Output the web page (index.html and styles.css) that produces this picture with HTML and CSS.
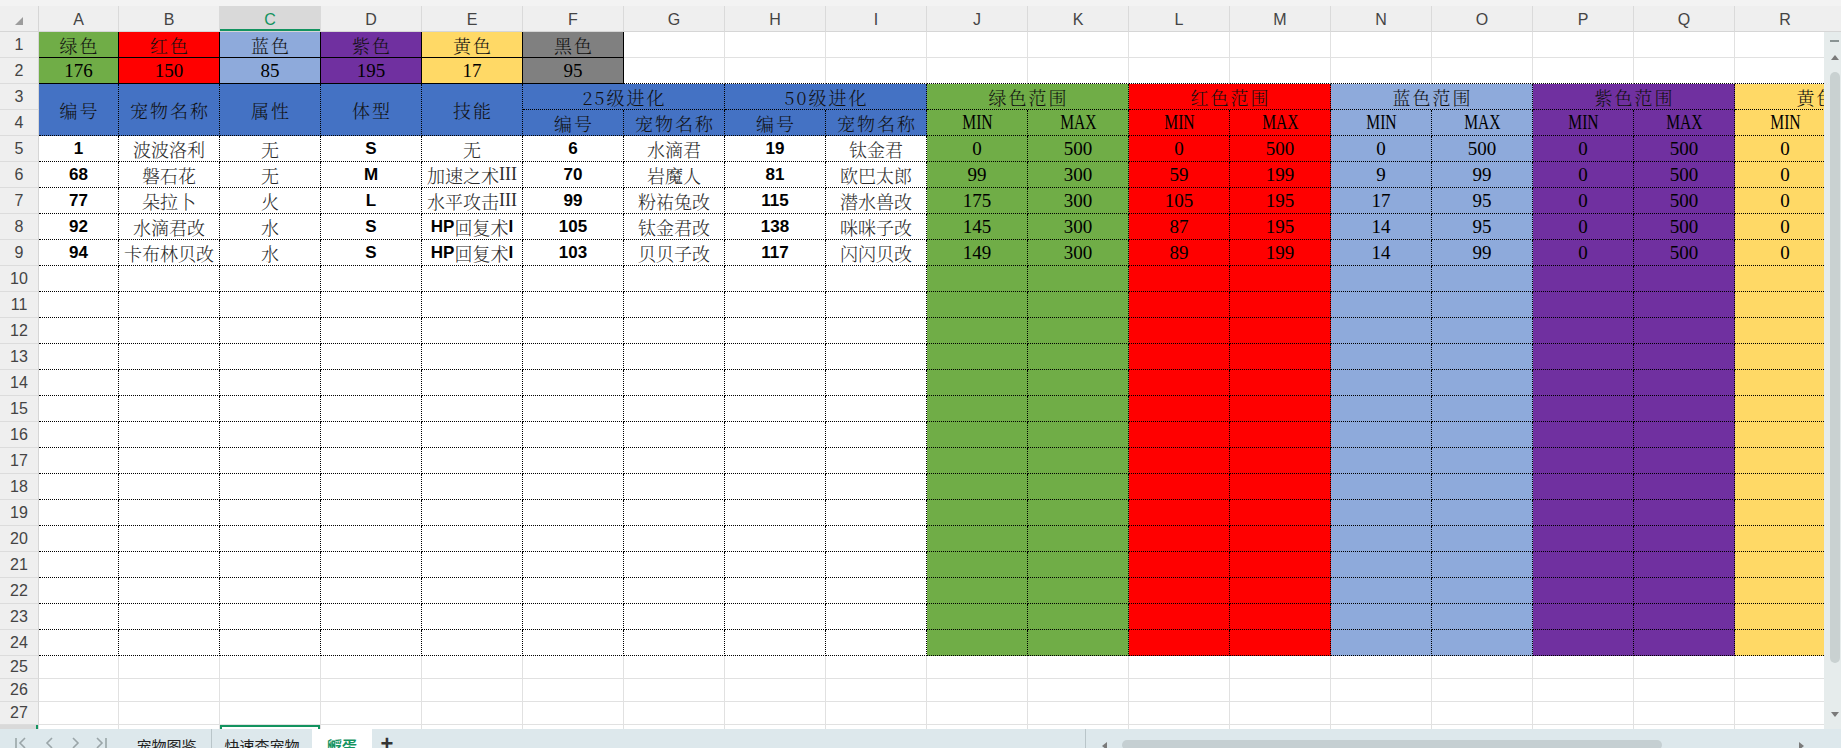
FILE: index.html
```html
<!DOCTYPE html>
<html lang="zh-CN">
  <head>
    <meta charset="UTF-8" />
    <title>孵蛋</title>
    <link rel="stylesheet" href="styles.css">
  </head>
  <body>
    <div id="app">
      <div class="strip"></div>
      <div id="main">
        <div id="sheet">
          <div id="grid">
            <div class="row">
              <div class="corner">
                <svg width="8" height="8" viewBox="0 0 8 8"><polygon points="8,0 8,8 0,8" fill="#9c9c9c"/></svg>
              </div>
              <div class="ch">A</div>
              <div class="ch">B</div>
              <div class="ch active">C</div>
              <div class="ch">D</div>
              <div class="ch">E</div>
              <div class="ch">F</div>
              <div class="ch">G</div>
              <div class="ch">H</div>
              <div class="ch">I</div>
              <div class="ch">J</div>
              <div class="ch">K</div>
              <div class="ch">L</div>
              <div class="ch">M</div>
              <div class="ch">N</div>
              <div class="ch">O</div>
              <div class="ch">P</div>
              <div class="ch">Q</div>
              <div class="ch">R</div>
              <div class="ch"></div>
            </div>

            <div class="row">
              <div class="rh">1</div>
              <div class="cell box gr cn sp">绿色</div>
              <div class="cell box rd cn sp">红色</div>
              <div class="cell box bl cn sp">蓝色</div>
              <div class="cell box pu cn sp">紫色</div>
              <div class="cell box ye cn sp">黄色</div>
              <div class="cell box gy cn sp">黑色</div>
              <div class="cell"></div><div class="cell"></div><div class="cell"></div>
              <div class="cell"></div><div class="cell"></div><div class="cell"></div>
              <div class="cell"></div><div class="cell"></div><div class="cell"></div>
              <div class="cell"></div><div class="cell"></div><div class="cell"></div>
              <div class="cell"></div>
            </div>

            <div class="row">
              <div class="rh">2</div>
              <div class="cell box gr ser">176</div>
              <div class="cell box rd ser">150</div>
              <div class="cell box bl ser">85</div>
              <div class="cell box pu ser">195</div>
              <div class="cell box ye ser">17</div>
              <div class="cell box gy ser">95</div>
              <div class="cell edge"></div><div class="cell edge"></div><div class="cell edge"></div>
              <div class="cell edge"></div><div class="cell edge"></div><div class="cell edge"></div>
              <div class="cell edge"></div><div class="cell edge"></div><div class="cell edge"></div>
              <div class="cell edge"></div><div class="cell edge"></div><div class="cell edge"></div>
              <div class="cell edge"></div>
            </div>

            <div class="row">
              <div class="rh">3</div>
              <div class="cell dot hd cn sp tall">编号</div>
              <div class="cell dot hd cn sp tall">宠物名称</div>
              <div class="cell dot hd cn sp tall">属性</div>
              <div class="cell dot hd cn sp tall">体型</div>
              <div class="cell dot hd cn sp tall">技能</div>
              <div class="cell dot hd cn sp wide">25级进化</div>
              <div class="cell dot hd cn sp wide">50级进化</div>
              <div class="cell dot gr cn sp wide">绿色范围</div>
              <div class="cell dot rd cn sp wide">红色范围</div>
              <div class="cell dot bl cn sp wide">蓝色范围</div>
              <div class="cell dot pu cn sp wide">紫色范围</div>
              <div class="cell dot ye cn sp wide">黄色范围</div>
            </div>

            <div class="row">
              <div class="rh">4</div>
              <div class="cell dot hd cn sp">编号</div>
              <div class="cell dot hd cn sp">宠物名称</div>
              <div class="cell dot hd cn sp">编号</div>
              <div class="cell dot hd cn sp">宠物名称</div>
              <div class="cell dot gr"><span class="mm">MIN</span></div>
              <div class="cell dot gr"><span class="mm">MAX</span></div>
              <div class="cell dot rd"><span class="mm">MIN</span></div>
              <div class="cell dot rd"><span class="mm">MAX</span></div>
              <div class="cell dot bl"><span class="mm">MIN</span></div>
              <div class="cell dot bl"><span class="mm">MAX</span></div>
              <div class="cell dot pu"><span class="mm">MIN</span></div>
              <div class="cell dot pu"><span class="mm">MAX</span></div>
              <div class="cell dot ye"><span class="mm">MIN</span></div>
              <div class="cell dot ye"></div>
            </div>

            <div class="row">
              <div class="rh">5</div>
              <div class="cell dot num">1</div>
              <div class="cell dot cn">波波洛利</div>
              <div class="cell dot cn">无</div>
              <div class="cell dot num">S</div>
              <div class="cell dot cn">无</div>
              <div class="cell dot num">6</div>
              <div class="cell dot cn">水滴君</div>
              <div class="cell dot num">19</div>
              <div class="cell dot cn">钛金君</div>
              <div class="cell dot gr ser">0</div>
              <div class="cell dot gr ser">500</div>
              <div class="cell dot rd ser">0</div>
              <div class="cell dot rd ser">500</div>
              <div class="cell dot bl ser">0</div>
              <div class="cell dot bl ser">500</div>
              <div class="cell dot pu ser">0</div>
              <div class="cell dot pu ser">500</div>
              <div class="cell dot ye ser">0</div>
              <div class="cell dot ye"></div>
            </div>

            <div class="row">
              <div class="rh">6</div>
              <div class="cell dot num">68</div>
              <div class="cell dot cn">磐石花</div>
              <div class="cell dot cn">无</div>
              <div class="cell dot num">M</div>
              <div class="cell dot cn">加速之术<span class="lat">III</span></div>
              <div class="cell dot num">70</div>
              <div class="cell dot cn">岩魔人</div>
              <div class="cell dot num">81</div>
              <div class="cell dot cn">欧巴太郎</div>
              <div class="cell dot gr ser">99</div>
              <div class="cell dot gr ser">300</div>
              <div class="cell dot rd ser">59</div>
              <div class="cell dot rd ser">199</div>
              <div class="cell dot bl ser">9</div>
              <div class="cell dot bl ser">99</div>
              <div class="cell dot pu ser">0</div>
              <div class="cell dot pu ser">500</div>
              <div class="cell dot ye ser">0</div>
              <div class="cell dot ye"></div>
            </div>

            <div class="row">
              <div class="rh">7</div>
              <div class="cell dot num">77</div>
              <div class="cell dot cn">朵拉卜</div>
              <div class="cell dot cn">火</div>
              <div class="cell dot num">L</div>
              <div class="cell dot cn">水平攻击<span class="lat">III</span></div>
              <div class="cell dot num">99</div>
              <div class="cell dot cn">粉祐兔改</div>
              <div class="cell dot num">115</div>
              <div class="cell dot cn">潜水兽改</div>
              <div class="cell dot gr ser">175</div>
              <div class="cell dot gr ser">300</div>
              <div class="cell dot rd ser">105</div>
              <div class="cell dot rd ser">195</div>
              <div class="cell dot bl ser">17</div>
              <div class="cell dot bl ser">95</div>
              <div class="cell dot pu ser">0</div>
              <div class="cell dot pu ser">500</div>
              <div class="cell dot ye ser">0</div>
              <div class="cell dot ye"></div>
            </div>

            <div class="row">
              <div class="rh">8</div>
              <div class="cell dot num">92</div>
              <div class="cell dot cn">水滴君改</div>
              <div class="cell dot cn">水</div>
              <div class="cell dot num">S</div>
              <div class="cell dot cn"><span class="num">HP</span>回复术<span class="num">I</span></div>
              <div class="cell dot num">105</div>
              <div class="cell dot cn">钛金君改</div>
              <div class="cell dot num">138</div>
              <div class="cell dot cn">咪咪子改</div>
              <div class="cell dot gr ser">145</div>
              <div class="cell dot gr ser">300</div>
              <div class="cell dot rd ser">87</div>
              <div class="cell dot rd ser">195</div>
              <div class="cell dot bl ser">14</div>
              <div class="cell dot bl ser">95</div>
              <div class="cell dot pu ser">0</div>
              <div class="cell dot pu ser">500</div>
              <div class="cell dot ye ser">0</div>
              <div class="cell dot ye"></div>
            </div>

            <div class="row">
              <div class="rh">9</div>
              <div class="cell dot num">94</div>
              <div class="cell dot cn">卡布林贝改</div>
              <div class="cell dot cn">水</div>
              <div class="cell dot num">S</div>
              <div class="cell dot cn"><span class="num">HP</span>回复术<span class="num">I</span></div>
              <div class="cell dot num">103</div>
              <div class="cell dot cn">贝贝子改</div>
              <div class="cell dot num">117</div>
              <div class="cell dot cn">闪闪贝改</div>
              <div class="cell dot gr ser">149</div>
              <div class="cell dot gr ser">300</div>
              <div class="cell dot rd ser">89</div>
              <div class="cell dot rd ser">199</div>
              <div class="cell dot bl ser">14</div>
              <div class="cell dot bl ser">99</div>
              <div class="cell dot pu ser">0</div>
              <div class="cell dot pu ser">500</div>
              <div class="cell dot ye ser">0</div>
              <div class="cell dot ye"></div>
            </div>
            <!-- rows 10-28 are built by the script below -->
          </div>
        </div>

        <div id="vscroll">
          <div class="vs-head"></div>
          <div class="vs-track">
            <span class="vs-dash"></span>
            <span class="vs-up"></span>
            <span class="vs-thumb"></span>
            <span class="vs-down"></span>
          </div>
        </div>
      </div>

      <div id="tabs">
        <div class="nav">
          <svg width="122" height="19" viewBox="0 0 122 19">
            <g fill="none" stroke="#9aa5a8" stroke-width="1.6">
              <line x1="16" y1="9" x2="16" y2="19"/>
              <polyline points="25,9 20,14 25,19"/>
              <polyline points="52,9 47,14 52,19"/>
              <polyline points="73,9 78,14 73,19"/>
              <polyline points="97,9 102,14 97,19"/>
              <line x1="106" y1="9" x2="106" y2="19"/>
            </g>
          </svg>
        </div>
        <div class="tab t1">宠物图鉴</div>
        <div class="tab t2">快速查宠物</div>
        <div class="tab current">孵蛋</div>
        <div class="tab add">+</div>
        <div class="hscroll">
          <span class="hs-left"></span>
          <span class="hs-thumb"></span>
          <span class="hs-right"></span>
        </div>
      </div>
    </div>

    <script>
      const grid = document.getElementById("grid");
      const bands = ["gr", "gr", "rd", "rd", "bl", "bl", "pu", "pu", "ye", "ye"];

      for (let r = 10; r <= 28; r++) {
        const row = document.createElement("div");
        row.className = "row";
        let html = '<div class="rh' + (r === 28 ? " cur" : "") + '">' + r + "</div>";
        for (let c = 0; c < 19; c++) {
          if (r <= 24) {
            const band = c >= 9 ? " " + bands[c - 9] : "";
            html += '<div class="cell dot' + band + '"></div>';
          } else {
            // C28 is the selected cell, only its top edge shows
            html += '<div class="cell' + (r === 28 && c === 2 ? " sel" : "") + '"></div>';
          }
        }
        row.innerHTML = html;
        grid.appendChild(row);
      }
    </script>
  </body>
</html>
```

FILE: styles.css
```css
* {
  box-sizing: border-box;
}
body {
  margin: 0;
  width: 1841px;
  height: 748px;
  overflow: hidden;
  background-color: #fff;
  font-family: "Liberation Sans", Arial, sans-serif;
}
#app {
  display: flex;
  flex-direction: column;
  height: 748px;
}
.strip {
  flex: none;
  height: 6px;
  background-color: #f3f3f3;
}
#main {
  flex: none;
  display: flex;
  height: 723px;
}
#sheet {
  width: 1824px;
  overflow: hidden;
}
#grid {
  display: grid;
  grid-template-columns: 39px 80px repeat(18, 101px);
  grid-template-rows: 26px repeat(24, 26px) repeat(3, 23px) 26px;
  width: 1937px;
}
.row {
  display: contents;
}

/* headers */
.corner {
  display: flex;
  align-items: flex-start;
  padding: 11px 0 0 15px;
  background-color: #efefef;
  border-right: 1px solid #d6d6d6;
  border-bottom: 1px solid #d6d6d6;
}
.ch {
  display: flex;
  align-items: center;
  justify-content: center;
  padding-top: 2px;
  background-color: #efefef;
  border-right: 1px solid #dadada;
  border-bottom: 1px solid #d6d6d6;
  color: #444;
  font-size: 16px;
}
.ch.active {
  background-color: #d9d9d9;
  color: #13935f;
  box-shadow: inset 0 -2px 0 #13935f;
}
.rh {
  display: flex;
  align-items: center;
  justify-content: center;
  background-color: #efefef;
  border-right: 1px solid #d6d6d6;
  border-bottom: 1px solid #dcdcdc;
  color: #444;
  font-size: 16px;
}
.rh.cur {
  background-color: #d9d9d9;
  box-shadow: inset -2px 0 0 #13935f;
}

/* cells */
.cell {
  display: flex;
  align-items: center;
  justify-content: center;
  white-space: nowrap;
  overflow: hidden;
  border-right: 1px solid #e1e1e1;
  border-bottom: 1px solid #e1e1e1;
  color: #000;
}
.cell.dot {
  border-right: 1px dotted #000;
  border-bottom: 1px dotted #000;
}
.cell.box {
  border-right: 1px solid #000;
  border-bottom: 1px solid #000;
}
.cell.edge {
  border-bottom: 1px dotted #000;
}
.cell.tall {
  grid-row: span 2;
}
.cell.wide {
  grid-column: span 2;
}
.cell.sel {
  box-shadow: inset 0 2px 0 #13935f, inset 2px 0 0 #13935f, inset -2px 0 0 #13935f;
}

.gr { background-color: #70ad47; }
.rd { background-color: #ff0000; }
.bl { background-color: #8eaadb; }
.pu { background-color: #7030a0; }
.ye { background-color: #ffd966; }
.gy { background-color: #808080; }
.hd { background-color: #4472c4; }

/* text styles */
.cn {
  font-family: "Noto Serif CJK SC", "Noto Sans CJK SC", serif;
  font-weight: 300;
  font-size: 18px;
  color: #2a2a2a;
}
.hd.cn,
.gr.cn,
.rd.cn,
.bl.cn,
.pu.cn,
.ye.cn,
.gy.cn {
  color: #111;
}
.sp {
  letter-spacing: 2px;
  padding-left: 2px;
}
.num {
  font-family: "Liberation Sans", Arial, sans-serif;
  font-weight: bold;
  font-size: 17px;
  color: #000;
  letter-spacing: 0;
}
.ser {
  font-family: "Liberation Serif", "Times New Roman", serif;
  font-size: 19px;
  color: #000;
}
.lat {
  font-family: "Liberation Serif", "Times New Roman", serif;
  font-size: 18px;
}
.mm {
  display: inline-block;
  font-family: "Liberation Serif", "Times New Roman", serif;
  font-size: 20px;
  color: #000;
  transform: scaleX(0.78);
}

/* vertical scrollbar */
#vscroll {
  width: 17px;
  display: flex;
  flex-direction: column;
}
.vs-head {
  flex: none;
  height: 26px;
  background-color: #efefef;
  border-bottom: 1px solid #d6d6d6;
}
.vs-track {
  flex: 1;
  display: flex;
  flex-direction: column;
  align-items: center;
  padding: 8px 0 0 4px;
  background-color: #e6ecec;
}
.vs-dash {
  width: 9px;
  height: 2px;
  background-color: #8a9494;
}
.vs-up {
  margin-top: 13px;
  width: 0;
  height: 0;
  border-left: 4px solid transparent;
  border-right: 4px solid transparent;
  border-bottom: 5px solid #7a7a7a;
}
.vs-thumb {
  margin-top: 12px;
  width: 10px;
  height: 591px;
  border-radius: 5px;
  background-color: #c9d1d1;
}
.vs-down {
  margin-top: 49px;
  width: 0;
  height: 0;
  border-left: 4px solid transparent;
  border-right: 4px solid transparent;
  border-top: 5px solid #7a7a7a;
}

/* sheet tabs */
#tabs {
  flex: none;
  height: 19px;
  display: flex;
  align-items: stretch;
  background-color: #dde8ec;
  overflow: hidden;
}
.nav {
  width: 122px;
  flex: none;
}
.tab {
  flex: none;
  padding-top: 7px;
  text-align: center;
  font-family: "Noto Sans CJK SC", sans-serif;
  font-size: 15px;
  line-height: 20px;
  color: #222;
}
.tab.t1 {
  width: 90px;
  border-right: 1px solid #b9c5c9;
}
.tab.t2 {
  width: 100px;
}
.tab.current {
  width: 60px;
  background-color: #fff;
  color: #13935f;
  font-weight: bold;
}
.tab.add {
  width: 30px;
  padding-top: 5px;
  font-family: "Liberation Sans", Arial, sans-serif;
  font-size: 22px;
  font-weight: bold;
  color: #333;
}
.hscroll {
  margin-left: auto;
  width: 756px;
  display: flex;
  align-items: flex-start;
  padding-top: 11px;
  border-left: 1px solid #b9c5c9;
}
.hs-left {
  margin: 2px 0 0 16px;
  width: 0;
  height: 0;
  border-top: 4px solid transparent;
  border-bottom: 4px solid transparent;
  border-right: 5px solid #7a7a7a;
}
.hs-thumb {
  margin-left: 15px;
  width: 540px;
  height: 10px;
  border-radius: 5px;
  background-color: #c5cfd2;
}
.hs-right {
  margin: 2px 0 0 137px;
  width: 0;
  height: 0;
  border-top: 4px solid transparent;
  border-bottom: 4px solid transparent;
  border-left: 5px solid #7a7a7a;
}
```
